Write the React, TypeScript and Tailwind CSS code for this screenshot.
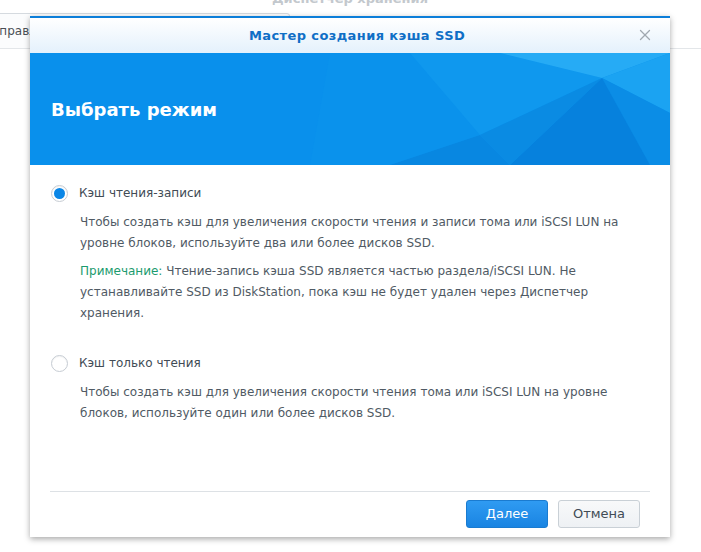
import { X } from "lucide-react";

type RadioProps = {
  checked: boolean;
};

const Radio = ({ checked }: RadioProps) => {
  return (
    <span className="w-[17px] h-[17px] shrink-0 rounded-full border border-[#c6ccd3] bg-white flex items-center justify-center shadow-[inset_0_1px_1px_rgba(0,0,0,0.05)]">
      {checked ? <span className="w-[11px] h-[11px] rounded-full bg-[#0a86e6]" /> : ""}
    </span>
  );
};

const BannerPattern = () => {
  return (
    <svg
      className="absolute inset-0 w-full h-full"
      viewBox="0 0 640 112"
      preserveAspectRatio="none"
    >
      <polygon points="300,0 640,0 640,112 280,112" fill="#0a92ec" />
      <polygon points="380,0 470,0 572,25 450,82" fill="#0f98ee" />
      <polygon points="470,0 640,0 572,25" fill="#26abf5" />
      <polygon points="572,25 640,0 640,60" fill="#1ba3f2" />
      <polygon points="572,25 640,60 640,112 620,112" fill="#0b8de6" />
      <polygon points="572,25 620,112 480,112" fill="#0681dd" />
      <polygon points="572,25 480,112 450,82" fill="#0a8be3" />
      <polygon points="450,82 480,112 360,112" fill="#0887e1" />
    </svg>
  );
};

const App = () => {
  return (
    <div className="relative w-[701px] h-[552px] overflow-hidden bg-white font-['DejaVu_Sans',sans-serif]">
      {/* MARK: BACKGROUND WINDOW */}
      <p className="absolute left-[272px] top-[-11px] text-[13px] font-bold text-[#c3c8cd]">
        Диспетчер хранения
      </p>
      <div className="absolute left-[-20px] top-[13px] w-[310px] h-[36px] border border-[#d5dadf] rounded-tr-[3px] bg-[#fbfcfd] flex items-center pl-[11px] text-[12px] text-[#4a4f55]">
        Управление
      </div>
      <div className="absolute left-0 right-0 top-[48px] h-px bg-[#e3e6e9]" />

      {/* MARK: DIALOG */}
      <div className="absolute left-[30px] top-[16px] w-[640px] h-[521px] bg-white flex flex-col shadow-[0_2px_6px_rgba(0,0,0,0.35)]">
        <div className="h-[37px] shrink-0 border-t-2 border-[#0c7ed9] bg-gradient-to-b from-white to-[#e4f1fc] relative flex items-center justify-center pl-[14px]">
          <p className="text-[13px] font-bold tracking-[0.4px] text-[#0f6fc6]">
            Мастер создания кэша SSD
          </p>
          <X
            className="absolute right-[16px] top-[8px] w-[18px] h-[18px] text-[#a0a8b0]"
            strokeWidth={1.7}
          />
        </div>

        <div className="h-[112px] shrink-0 relative bg-[#0990ec] flex items-center px-[21px]">
          <BannerPattern />
          <p className="relative text-[18px] font-bold text-white">Выбрать режим</p>
        </div>

        <div className="flex-1 flex flex-col px-[21px] pt-[18px] text-[12px] leading-[21px] text-[#414b55]">
          {/* MARK: READ-WRITE */}
          <div className="flex items-center gap-[11px]">
            <Radio checked={true} />
            <p>Кэш чтения-записи</p>
          </div>
          <div className="pl-[29px] mt-[8px] text-[#505a64] flex flex-col gap-[7px]">
            <p>
              Чтобы создать кэш для увеличения скорости чтения и записи тома или iSCSI LUN на
              уровне блоков, используйте два или более дисков SSD.
            </p>
            <p>
              <span className="text-[#1c9b6e]">Примечание:</span> Чтение-запись кэша SSD
              является частью раздела/iSCSI LUN. Не устанавливайте SSD из DiskStation, пока
              кэш не будет удален через Диспетчер хранения.
            </p>
          </div>

          {/* MARK: READ ONLY */}
          <div className="flex items-center gap-[11px] mt-[29px]">
            <Radio checked={false} />
            <p>Кэш только чтения</p>
          </div>
          <div className="pl-[29px] mt-[8px] text-[#505a64]">
            <p>
              Чтобы создать кэш для увеличения скорости чтения тома или iSCSI LUN на уровне
              блоков, используйте один или более дисков SSD.
            </p>
          </div>
        </div>

        {/* MARK: FOOTER */}
        <div className="mx-[20px] h-px bg-[#dde1e5]" />
        <div className="h-[45px] shrink-0 flex items-start justify-end gap-[10px] pt-[8px] pr-[30px]">
          <button className="w-[82px] h-[28px] rounded-[3px] border border-[#1a7bd0] bg-gradient-to-b from-[#2f9bf2] to-[#1984e2] text-[13px] text-white">
            Далее
          </button>
          <button className="w-[82px] h-[28px] rounded-[3px] border border-[#c9d0d6] bg-gradient-to-b from-[#f8f9fa] to-[#eef1f4] text-[13px] text-[#414b55]">
            Отмена
          </button>
        </div>
      </div>
    </div>
  );
};

export default App;
